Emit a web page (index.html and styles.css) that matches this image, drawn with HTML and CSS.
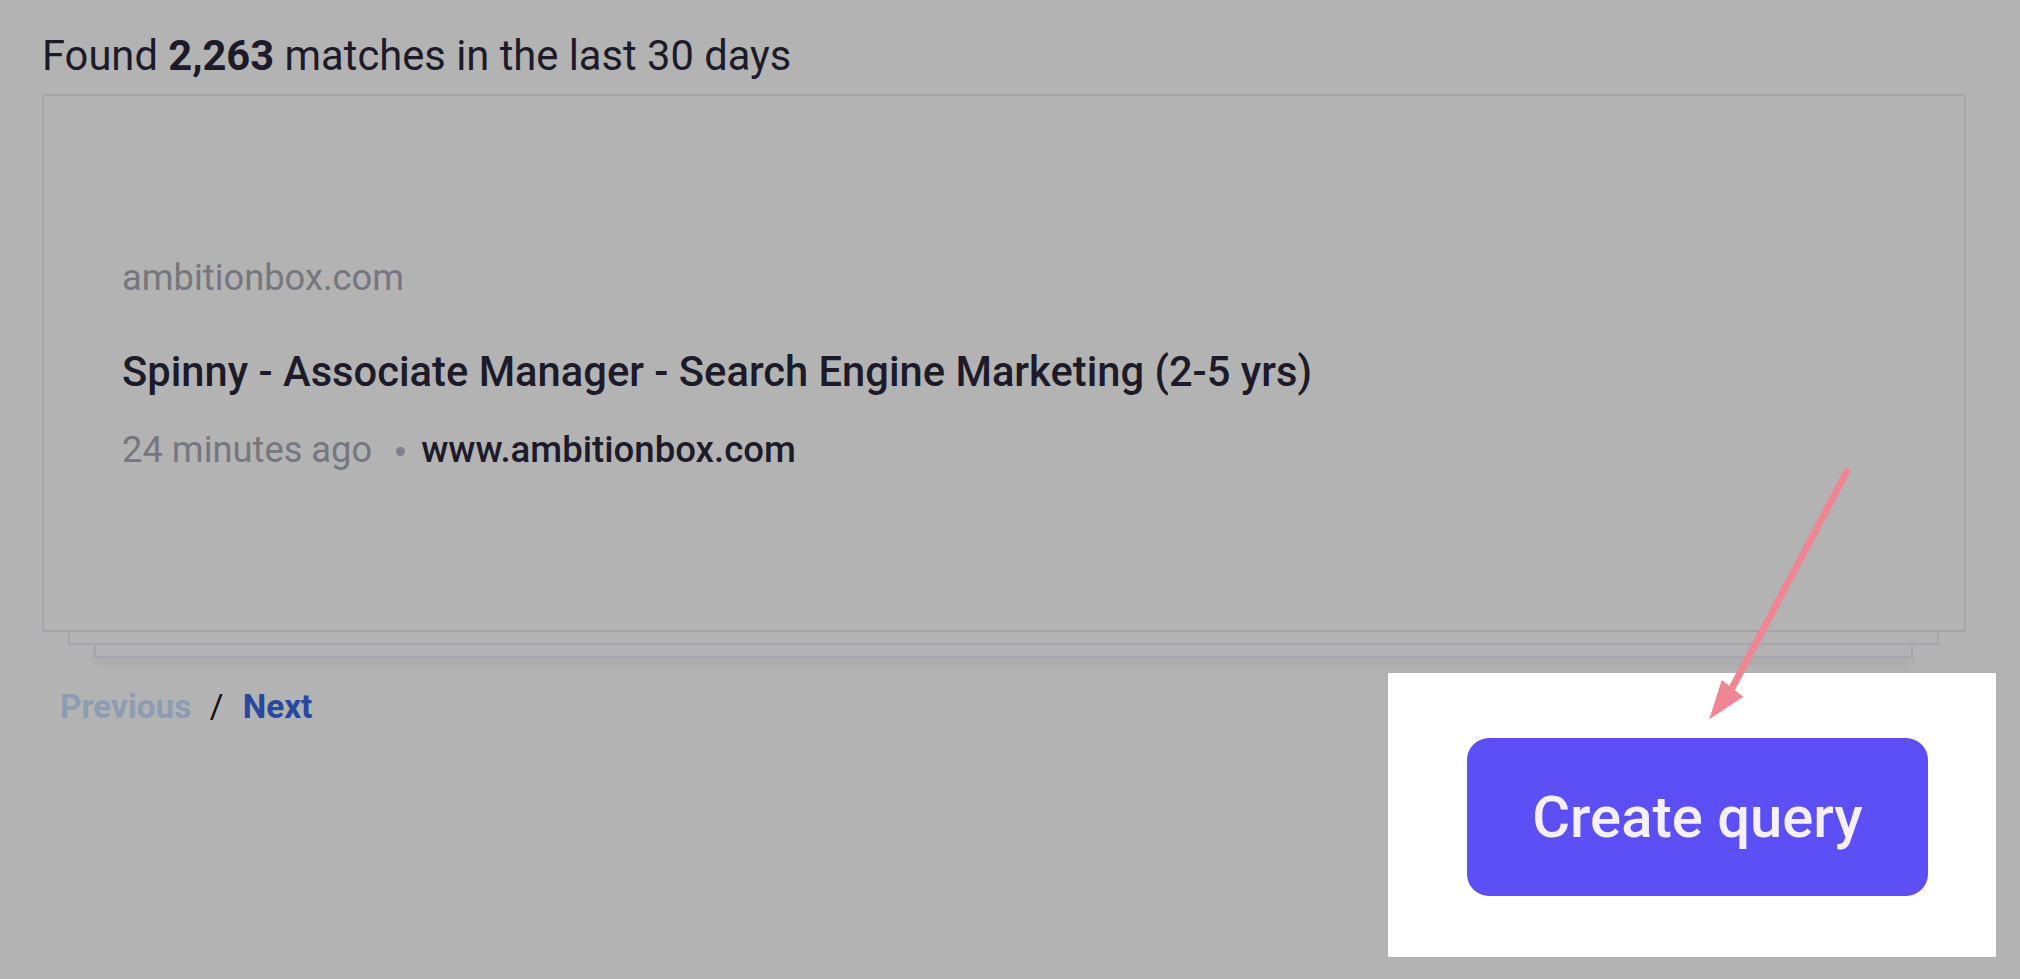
FILE: index.html
```html
<!DOCTYPE html>
<html lang="en">

<head>
    <meta charset="UTF-8">
    <meta name="viewport" content="width=device-width, initial-scale=1.0">
    <title>Mentions</title>
    <link rel="stylesheet" href="styles.css">
</head>

<body>
    <div class="page">
        <p class="summary">Found <strong>2,263</strong> matches in the last 30 days</p>

        <!-- Result card with stacked sheets below -->
        <div class="results">
            <div class="card">
                <div class="source">ambitionbox.com</div>
                <div class="title">Spinny - Associate Manager - Search Engine Marketing (2-5 yrs)</div>
                <div class="meta">
                    <span class="time">24 minutes ago</span>
                    <span class="dot"></span>
                    <span class="site">www.ambitionbox.com</span>
                </div>
            </div>
            <div class="sheet sheet-1"></div>
            <div class="sheet sheet-2"></div>
        </div>

        <div class="footer">
            <div class="pager">
                <span class="prev">Previous</span>
                <span class="sep">/</span>
                <span class="next">Next</span>
            </div>
            <div class="spotlight">
                <button class="create">Create query</button>
            </div>
        </div>

        <!-- Annotation arrow -->
        <svg class="arrow" width="170" height="270" viewBox="0 0 170 270">
            <line x1="156.7" y1="11.7" x2="40" y2="232" stroke="#ee8694" stroke-width="7" stroke-linecap="round" />
            <polygon points="19.3,259.3 53.3,236.7 31.7,220" fill="#ee8694" />
        </svg>
    </div>
</body>

</html>
```

FILE: styles.css
```css
body {
    margin: 0;
    background-color: #b3b3b3;
    font-family: Roboto, "Liberation Sans", sans-serif;
    color: #1d1b2a;
}

.page {
    position: relative;
    height: 979px;
    padding: 0 24px 0 42px;
    overflow: hidden;
}

.summary {
    margin: 0;
    padding-top: 31px;
    font-size: 41.7px;
    line-height: 49px;
}

.summary strong {
    font-weight: 700;
}

/* Card stack */
.results {
    margin: 14px 30px 0 0;
}

.card {
    border: 2px solid #a5a5ac;
    padding: 161px 40px 159px 78px;
}

.source {
    font-size: 36.3px;
    line-height: 42px;
    color: #76767e;
}

.title {
    margin-top: 48px;
    font-size: 41.7px;
    line-height: 49px;
    font-weight: 500;
}

.meta {
    margin-top: 33px;
    font-size: 36.3px;
    line-height: 42px;
    display: flex;
    align-items: center;
}

.time {
    color: #76767e;
}

.dot {
    width: 9px;
    height: 9px;
    border-radius: 50%;
    background: #808088;
    margin: 2px 16px 0 24px;
}

.site {
    font-size: 36.6px;
    font-weight: 500;
}

.sheet {
    height: 11px;
    border: 2px solid #a5a5ac;
    border-top: none;
}

.sheet-1 {
    margin: 0 27px 0 26px;
}

.sheet-2 {
    margin: 0 53px 0 52px;
    box-shadow: 0 8px 10px rgba(0, 0, 0, 0.04);
}

/* Pagination and highlighted action */
.footer {
    display: flex;
    justify-content: space-between;
    align-items: flex-start;
    margin-top: 15px;
}

.pager {
    padding: 14px 0 0 18px;
    font-size: 33.3px;
    line-height: 39px;
    font-weight: 700;
}

.prev {
    color: #8e9cb3;
}

.sep {
    color: #111;
    font-weight: 400;
    margin: 0 11px 0 10px;
}

.next {
    color: #2848a0;
}

.spotlight {
    width: 608px;
    height: 284px;
    background: white;
    box-sizing: border-box;
    padding: 65px 0 0 79px;
}

.create {
    width: 461px;
    height: 158px;
    border: none;
    border-radius: 22px;
    background-color: #5c4ff5;
    color: #f4f0ff;
    font-family: Roboto, sans-serif;
    font-size: 58px;
    font-weight: 500;
    cursor: pointer;
}

.arrow {
    position: absolute;
    left: 1690px;
    top: 460px;
}
```
